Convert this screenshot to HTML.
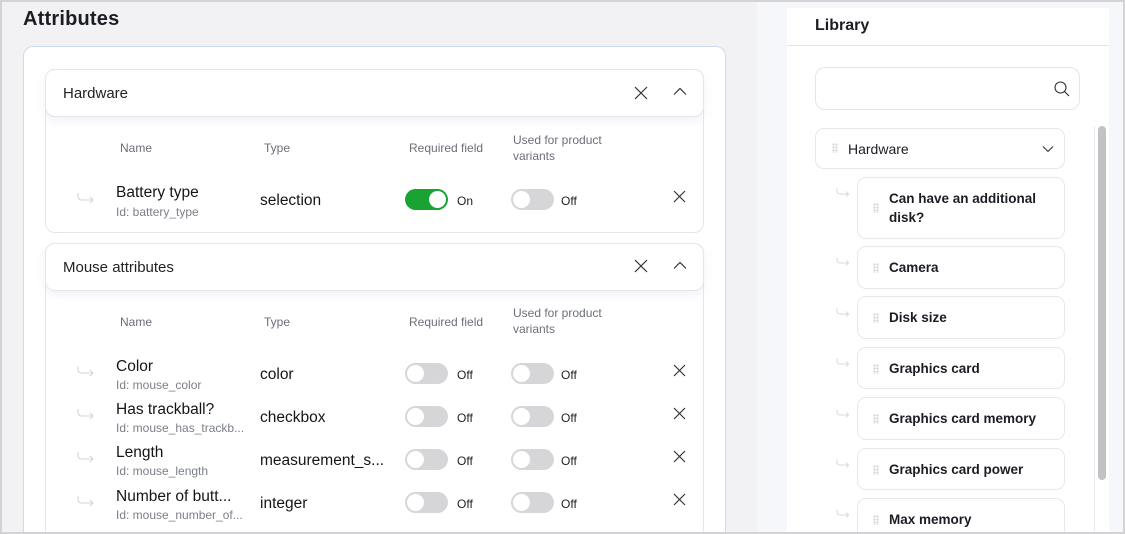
<!DOCTYPE html>
<html><head><meta charset="utf-8"><style>
*{box-sizing:border-box;margin:0;padding:0}
html,body{width:1125px;height:534px;overflow:hidden}
body{background:#f2f2f4;font-family:"Liberation Sans",sans-serif;color:#111}
#w{position:relative;width:1125px;height:534px;overflow:hidden}
.a{position:absolute}
.frame{position:absolute;left:0;top:0;width:1125px;height:534px;border:2px solid #d3d3d5;pointer-events:none;z-index:10}
h1{position:absolute;left:23px;top:8px;font-size:20px;font-weight:bold;color:#1b1d24;letter-spacing:.2px}
.card{position:absolute;left:23px;top:46px;width:703px;height:488px;background:#fff;border:1px solid #c9dcf3;border-bottom:none;border-radius:10px 10px 0 0}
.grp{position:absolute;left:45px;width:659px;background:#fff;border:1px solid #e4e6ea;border-radius:10px}
.hdr{position:absolute;left:-1px;top:-1px;width:659px;height:48px;border:1px solid #e4e6ea;border-radius:10px;background:#fff;box-shadow:0 4px 8px rgba(200,205,220,.25)}
.hdr span{position:absolute;left:17px;top:15px;font-size:15px;color:#222}
.col{position:absolute;font-size:12px;color:#6b6f78;line-height:16px}
.nm{position:absolute;font-size:15.5px;color:#151515}
.id{position:absolute;font-size:12px;color:#7b7f88}
.ty{position:absolute;font-size:15.5px;color:#151515}
.tg{position:absolute;width:43px;height:21px;border-radius:11px;background:#d6d6d8}
.tg::after{content:"";position:absolute;left:2px;top:2px;width:17px;height:17px;border-radius:50%;background:#fff}
.tg.on{background:#1aa332}
.tg.on::after{left:24px}
.lb{position:absolute;font-size:12px;color:#222}
svg{position:absolute}
.lib{position:absolute;left:787px;top:8px;width:322px;height:526px;background:#fff}
.li{position:absolute;background:#fff;border:1px solid #e6e8ec;border-radius:9px;font-size:13.5px;font-weight:bold;color:#1b1d24}
.dots{position:absolute;width:6px;height:10px;background-image:radial-gradient(circle,#cfd1d6 1px,transparent 1.2px);background-size:3px 3px}
.ar{stroke:#d2d5db}
</style></head><body><div id="w">
<h1>Attributes</h1>
<div class="card"></div>

<div class="grp" style="top:69px;height:164px">
 <div class="hdr"><span>Hardware</span></div>
</div>
<svg style="left:634px;top:86px" width="14" height="14" viewBox="0 0 14 14"><path d="M1 1L13 13M13 1L1 13" stroke="#333" stroke-width="1.2"/></svg>
<svg style="left:673px;top:87px" width="14" height="9" viewBox="0 0 14 9"><path d="M1 7.5L7 1.5L13 7.5" stroke="#333" stroke-width="1.2" fill="none"/></svg>
<div class="col" style="left:120px;top:140px">Name</div>
<div class="col" style="left:264px;top:140px">Type</div>
<div class="col" style="left:409px;top:140px">Required field</div>
<div class="col" style="left:513px;top:132px">Used for product<br>variants</div>

<div class="grp" style="top:243px;height:291px;border-bottom:none;border-radius:10px 10px 0 0">
 <div class="hdr"><span>Mouse attributes</span></div>
</div>
<svg style="left:634px;top:259px" width="14" height="14" viewBox="0 0 14 14"><path d="M1 1L13 13M13 1L1 13" stroke="#333" stroke-width="1.2"/></svg>
<svg style="left:673px;top:261px" width="14" height="9" viewBox="0 0 14 9"><path d="M1 7.5L7 1.5L13 7.5" stroke="#333" stroke-width="1.2" fill="none"/></svg>
<div class="col" style="left:120px;top:314px">Name</div>
<div class="col" style="left:264px;top:314px">Type</div>
<div class="col" style="left:409px;top:314px">Required field</div>
<div class="col" style="left:513px;top:305px">Used for product<br>variants</div>

<svg style="left:77px;top:192px" width="18" height="13" viewBox="0 0 18 13"><path class="ar" d="M1 1V4Q1 8 5 8H16M13 5L16 8L13 11" stroke-width="1.1" fill="none"/></svg>
<div class="nm" style="left:116px;top:184px">Battery type</div>
<div class="id" style="left:116px;top:205px">Id: battery_type</div>
<div class="ty" style="left:260px;top:192px">selection</div>
<div class="tg on" style="left:405px;top:189px"></div><div class="lb" style="left:457px;top:194px">On</div>
<div class="tg" style="left:511px;top:189px"></div><div class="lb" style="left:561px;top:194px">Off</div>
<svg style="left:673px;top:190px" width="13" height="13" viewBox="0 0 13 13"><path d="M1 1L12 12M12 1L1 12" stroke="#333" stroke-width="1.2"/></svg>

<svg style="left:77px;top:365px" width="18" height="13" viewBox="0 0 18 13"><path class="ar" d="M1 1V4Q1 8 5 8H16M13 5L16 8L13 11" stroke-width="1.1" fill="none"/></svg>
<div class="nm" style="left:116px;top:358px">Color</div>
<div class="id" style="left:116px;top:378px">Id: mouse_color</div>
<div class="ty" style="left:260px;top:366px">color</div>
<div class="tg" style="left:405px;top:363px"></div><div class="lb" style="left:457px;top:368px">Off</div>
<div class="tg" style="left:511px;top:363px"></div><div class="lb" style="left:561px;top:368px">Off</div>
<svg style="left:673px;top:364px" width="13" height="13" viewBox="0 0 13 13"><path d="M1 1L12 12M12 1L1 12" stroke="#333" stroke-width="1.2"/></svg>

<svg style="left:77px;top:408px" width="18" height="13" viewBox="0 0 18 13"><path class="ar" d="M1 1V4Q1 8 5 8H16M13 5L16 8L13 11" stroke-width="1.1" fill="none"/></svg>
<div class="nm" style="left:116px;top:401px">Has trackball?</div>
<div class="id" style="left:116px;top:421px">Id: mouse_has_trackb...</div>
<div class="ty" style="left:260px;top:409px">checkbox</div>
<div class="tg" style="left:405px;top:406px"></div><div class="lb" style="left:457px;top:411px">Off</div>
<div class="tg" style="left:511px;top:406px"></div><div class="lb" style="left:561px;top:411px">Off</div>
<svg style="left:673px;top:407px" width="13" height="13" viewBox="0 0 13 13"><path d="M1 1L12 12M12 1L1 12" stroke="#333" stroke-width="1.2"/></svg>

<svg style="left:77px;top:451px" width="18" height="13" viewBox="0 0 18 13"><path class="ar" d="M1 1V4Q1 8 5 8H16M13 5L16 8L13 11" stroke-width="1.1" fill="none"/></svg>
<div class="nm" style="left:116px;top:444px">Length</div>
<div class="id" style="left:116px;top:464px">Id: mouse_length</div>
<div class="ty" style="left:260px;top:452px">measurement_s...</div>
<div class="tg" style="left:405px;top:449px"></div><div class="lb" style="left:457px;top:454px">Off</div>
<div class="tg" style="left:511px;top:449px"></div><div class="lb" style="left:561px;top:454px">Off</div>
<svg style="left:673px;top:450px" width="13" height="13" viewBox="0 0 13 13"><path d="M1 1L12 12M12 1L1 12" stroke="#333" stroke-width="1.2"/></svg>

<svg style="left:77px;top:495px" width="18" height="13" viewBox="0 0 18 13"><path class="ar" d="M1 1V4Q1 8 5 8H16M13 5L16 8L13 11" stroke-width="1.1" fill="none"/></svg>
<div class="nm" style="left:116px;top:488px">Number of butt...</div>
<div class="id" style="left:116px;top:508px">Id: mouse_number_of...</div>
<div class="ty" style="left:260px;top:495px">integer</div>
<div class="tg" style="left:405px;top:492px"></div><div class="lb" style="left:457px;top:497px">Off</div>
<div class="tg" style="left:511px;top:492px"></div><div class="lb" style="left:561px;top:497px">Off</div>
<svg style="left:673px;top:493px" width="13" height="13" viewBox="0 0 13 13"><path d="M1 1L12 12M12 1L1 12" stroke="#333" stroke-width="1.2"/></svg>

<div class="a" style="left:757px;top:0;width:368px;height:534px;background:#f5f7fb"></div>
<div class="lib">
 <div class="a" style="left:28px;top:9px;font-size:16px;font-weight:bold;color:#1b1d24">Library</div>
 <div class="a" style="left:0;top:37px;width:322px;height:1px;background:#e4e6ea"></div>
 <div class="a" style="left:28px;top:59px;width:265px;height:43px;border:1px solid #e4e6ea;border-radius:10px"></div>
 <svg style="left:267px;top:73px" width="16" height="16" viewBox="0 0 16 16"><circle cx="6.5" cy="6.5" r="5.5" stroke="#333" stroke-width="1.1" fill="none"/><path d="M10.5 10.5L15 15" stroke="#333" stroke-width="1.2"/></svg>
 <div class="a" style="left:307px;top:118px;width:15px;height:408px;border-left:1px solid #e8eaee;background:#fff"></div>
 <div class="a" style="left:311px;top:118px;width:8px;height:354px;border-radius:4px;background:#c2c2c4"></div>
</div>
<div class="li" style="left:815px;top:128px;width:250px;height:41px;font-weight:normal;font-size:14px"><div class="dots" style="left:16px;top:14px"></div><span class="a" style="left:32px;top:12px">Hardware</span>
<svg style="left:226px;top:16px" width="12" height="8" viewBox="0 0 12 8"><path d="M1 1.5L6 6.5L11 1.5" stroke="#333" stroke-width="1.1" fill="none"/></svg></div>

<div class="li" style="left:857px;top:177px;width:208px;height:62px"><div class="dots" style="left:15px;top:25px"></div><span class="a" style="left:31px;top:11px;line-height:19px">Can have an additional<br>disk?</span></div>
<div class="li" style="left:857px;top:246px;width:208px;height:43px"><div class="dots" style="left:15px;top:16px"></div><span class="a" style="left:31px;top:13px">Camera</span></div>
<div class="li" style="left:857px;top:296px;width:208px;height:43px"><div class="dots" style="left:15px;top:16px"></div><span class="a" style="left:31px;top:13px">Disk size</span></div>
<div class="li" style="left:857px;top:347px;width:208px;height:42px"><div class="dots" style="left:15px;top:16px"></div><span class="a" style="left:31px;top:13px">Graphics card</span></div>
<div class="li" style="left:857px;top:397px;width:208px;height:43px"><div class="dots" style="left:15px;top:16px"></div><span class="a" style="left:31px;top:13px">Graphics card memory</span></div>
<div class="li" style="left:857px;top:448px;width:208px;height:42px"><div class="dots" style="left:15px;top:16px"></div><span class="a" style="left:31px;top:13px">Graphics card power</span></div>
<div class="li" style="left:857px;top:498px;width:208px;height:36px;border-bottom:none;border-radius:9px 9px 0 0"><div class="dots" style="left:15px;top:16px"></div><span class="a" style="left:31px;top:13px">Max memory</span></div>

<svg style="left:836px;top:188px" width="14" height="10" viewBox="0 0 14 10"><path d="M1 0.5V3Q1 6 4 6H12.5M10 3.5L12.5 6L10 8.5" stroke="#d8dadf" stroke-width="1" fill="none"/></svg>
<svg style="left:836px;top:257px" width="14" height="10" viewBox="0 0 14 10"><path d="M1 0.5V3Q1 6 4 6H12.5M10 3.5L12.5 6L10 8.5" stroke="#d8dadf" stroke-width="1" fill="none"/></svg>
<svg style="left:836px;top:308px" width="14" height="10" viewBox="0 0 14 10"><path d="M1 0.5V3Q1 6 4 6H12.5M10 3.5L12.5 6L10 8.5" stroke="#d8dadf" stroke-width="1" fill="none"/></svg>
<svg style="left:836px;top:358px" width="14" height="10" viewBox="0 0 14 10"><path d="M1 0.5V3Q1 6 4 6H12.5M10 3.5L12.5 6L10 8.5" stroke="#d8dadf" stroke-width="1" fill="none"/></svg>
<svg style="left:836px;top:409px" width="14" height="10" viewBox="0 0 14 10"><path d="M1 0.5V3Q1 6 4 6H12.5M10 3.5L12.5 6L10 8.5" stroke="#d8dadf" stroke-width="1" fill="none"/></svg>
<svg style="left:836px;top:459px" width="14" height="10" viewBox="0 0 14 10"><path d="M1 0.5V3Q1 6 4 6H12.5M10 3.5L12.5 6L10 8.5" stroke="#d8dadf" stroke-width="1" fill="none"/></svg>
<svg style="left:836px;top:509px" width="14" height="10" viewBox="0 0 14 10"><path d="M1 0.5V3Q1 6 4 6H12.5M10 3.5L12.5 6L10 8.5" stroke="#d8dadf" stroke-width="1" fill="none"/></svg>

<div class="frame"></div>
</div></body></html>
